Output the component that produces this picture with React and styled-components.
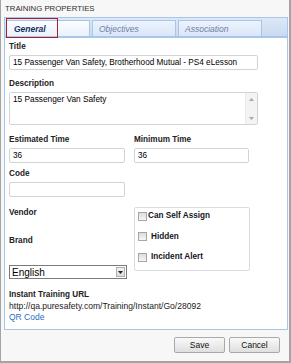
import styled, { createGlobalStyle } from "styled-components";

const Global = createGlobalStyle`
  html, body { margin: 0; padding: 0; background: #fff; }
  body { font-family: "Liberation Sans", Arial, sans-serif; font-size: 8px; }
`;

export default function App() {
  return (
    <>
      <Global />
      <Window>
        <Heading>TRAINING PROPERTIES</Heading>
        <Tabs>
          <Tab active>General</Tab>
          <Tab>Objectives</Tab>
          <Tab>Association</Tab>
        </Tabs>
        <Panel>
          <Label>Title</Label>
          <Input wide defaultValue="15 Passenger Van Safety, Brotherhood Mutual - PS4 eLesson" />
          <Label top={8}>Description</Label>
          <AreaBox>
            <Area defaultValue="15 Passenger Van Safety" />
            <Scroll>
              <svg width="5" height="3" viewBox="0 0 5 3"><path d="M0 3 L2.5 0 L5 3 Z" fill="#a8a8a8" /></svg>
              <svg width="5" height="3" viewBox="0 0 5 3"><path d="M0 0 L2.5 3 L5 0 Z" fill="#a8a8a8" /></svg>
            </Scroll>
          </AreaBox>
          <Row top={9}>
            <Col>
              <Label>Estimated Time</Label>
              <Input defaultValue="36" />
              <Label top={5}>Code</Label>
              <Input />
            </Col>
            <Col>
              <Label>Minimum Time</Label>
              <Input narrow defaultValue="36" />
            </Col>
          </Row>
          <Row top={10}>
            <Col>
              <Label>Vendor</Label>
              <Label top={16}>Brand</Label>
              <Select>
                <span>English</span>
                <Arrow>
                  <svg width="5" height="3" viewBox="0 0 5 3"><path d="M0 0 L2.5 3 L5 0 Z" fill="#222" /></svg>
                </Arrow>
              </Select>
            </Col>
            <Checks>
              <Check><Box />Can Self Assign</Check>
              <Check indent><Box />Hidden</Check>
              <Check indent><Box />Incident Alert</Check>
            </Checks>
          </Row>
          <Label top={10}>Instant Training URL</Label>
          <Plain>http://qa.puresafety.com/Training/Instant/Go/28092</Plain>
          <Link>QR Code</Link>
        </Panel>
        <Footer>
          <Button>Save</Button>
          <Button>Cancel</Button>
        </Footer>
      </Window>
    </>
  );
}

const Window = styled.div`
  width: 291px;
  height: 363px;
  box-sizing: border-box;
  background: #f7f7f7;
  border-left: 1px solid #a4a4a4;
  border-right: 2px solid #a4a4a4;
  border-bottom: 2px solid #a4a4a4;
  padding: 0 1px 0 3px;
  display: flex;
  flex-direction: column;
`;

const Heading = styled.div`
  height: 17px;
  padding: 3px 0 0 1px;
  box-sizing: border-box;
  color: #2f2f2f;
  font-size: 7.8px;
  line-height: 11px;
  flex-shrink: 0;
`;

const Tabs = styled.div`
  display: flex;
  height: 21px;
  flex-shrink: 0;
  box-sizing: border-box;
  background: linear-gradient(#dde8f7, #c9daf1);
  border: 1px solid #a9c5ea;
  border-bottom: 2px solid #a9c5ea;
  padding: 2px 0 0 1px;
  gap: 2px;
`;

const Tab = styled.div`
  position: relative;
  width: 84px;
  box-sizing: border-box;
  padding: 3px 0 0 ${p => (p.active ? 7 : 6)}px;
  font-style: italic;
  font-weight: ${p => (p.active ? 700 : 400)};
  font-size: 8.5px;
  color: ${p => (p.active ? "#17305c" : "#6e80a2")};
  background: ${p => (p.active ? "linear-gradient(#fbfdff, #e9f1fc)" : "linear-gradient(#ecf3fd, #dae6f8)")};
  border: 1px solid #a9c5ea;
  border-bottom: none;
  line-height: 11px;
  &::before {
    content: "";
    display: ${p => (p.active ? "block" : "none")};
    position: absolute;
    left: -1px;
    top: -3px;
    width: 52px;
    height: 20px;
    border: 1px solid #a52027;
    box-sizing: border-box;
  }
`;

const Panel = styled.div`
  background: #fff;
  border: 1px solid #a9c5ea;
  border-top: none;
  height: 292px;
  flex-shrink: 0;
  box-sizing: border-box;
  padding: 3px 4px 0 4px;
  display: flex;
  flex-direction: column;
  align-items: flex-start;
`;

const Label = styled.div`
  font-weight: 700;
  font-size: 8.2px;
  color: #222;
  line-height: 12px;
  margin-top: ${p => p.top || 0}px;
  flex-shrink: 0;
`;

const Input = styled.input`
  width: ${p => (p.wide ? 249 : p.narrow ? 115 : 116)}px;
  height: 15px;
  margin-top: 2px;
  flex-shrink: 0;
  box-sizing: border-box;
  border: 1px solid #d0d4da;
  border-radius: 2px;
  padding: 0 3px;
  font-family: "Liberation Sans", Arial, sans-serif;
  font-size: 8.2px;
  color: #000;
  outline: none;
  background: #fff;
`;

const AreaBox = styled.div`
  margin-top: 2px;
  width: 249px;
  height: 33px;
  flex-shrink: 0;
  box-sizing: border-box;
  border: 1px solid #d0d4da;
  border-radius: 2px;
  display: flex;
`;

const Area = styled.textarea`
  flex: 1;
  border: none;
  padding: 1px 3px;
  font-family: "Liberation Sans", Arial, sans-serif;
  font-size: 8.3px;
  color: #000;
  resize: none;
  overflow: hidden;
  outline: none;
`;

const Scroll = styled.div`
  width: 12px;
  background: #f3f3f3;
  border-left: 1px solid #ececec;
  display: flex;
  flex-direction: column;
  justify-content: space-between;
  align-items: center;
  padding: 5px 0 4px;
  box-sizing: border-box;
`;

const Row = styled.div`
  display: flex;
  gap: 9px;
  margin-top: ${p => p.top}px;
  flex-shrink: 0;
`;

const Col = styled.div`
  display: flex;
  flex-direction: column;
  align-items: flex-start;
  width: 116px;
`;

const Select = styled.div`
  margin-top: 18px;
  width: 118px;
  height: 14px;
  box-sizing: border-box;
  border: 1px solid #7b7b7b;
  display: flex;
  align-items: center;
  justify-content: space-between;
  padding: 0 1px 0 2px;
  font-size: 10px;
  color: #000;
  background: #fff;
`;

const Arrow = styled.span`
  width: 9px;
  height: 10px;
  box-sizing: border-box;
  border: 1px solid #b0b0b0;
  background: linear-gradient(#f2f2f2, #dcdcdc);
  display: flex;
  align-items: center;
  justify-content: center;
`;

const Checks = styled.div`
  width: 116px;
  height: 64px;
  box-sizing: border-box;
  border: 1px solid #d8dce2;
  border-radius: 2px;
  padding: 2px 3px;
  display: flex;
  flex-direction: column;
  gap: 8.5px;
`;

const Check = styled.div`
  display: flex;
  align-items: center;
  font-weight: 700;
  font-size: 8.2px;
  color: #151525;
  line-height: 12px;
  gap: ${p => (p.indent ? 4 : 1)}px;
`;

const Box = styled.span`
  width: 7px;
  height: 7px;
  border: 1px solid #a6a6a6;
  background: linear-gradient(#dcdcdc, #f6f6f6);
`;

const Plain = styled.div`
  color: #1a1a1a;
  font-size: 8.55px;
  line-height: 11px;
`;

const Link = styled.div`
  color: #1f6fc5;
  font-size: 8.5px;
  line-height: 11px;
`;

const Footer = styled.div`
  display: flex;
  justify-content: flex-end;
  gap: 4px;
  padding: 7px 8px 0 0;
`;

const Button = styled.button`
  width: 51px;
  height: 16px;
  border: 1px solid #a9a9a9;
  border-radius: 2px;
  background: linear-gradient(#f9f9f9, #dfdfdf);
  font-family: "Liberation Sans", Arial, sans-serif;
  font-size: 8.5px;
  color: #111;
  padding: 0;
`;
